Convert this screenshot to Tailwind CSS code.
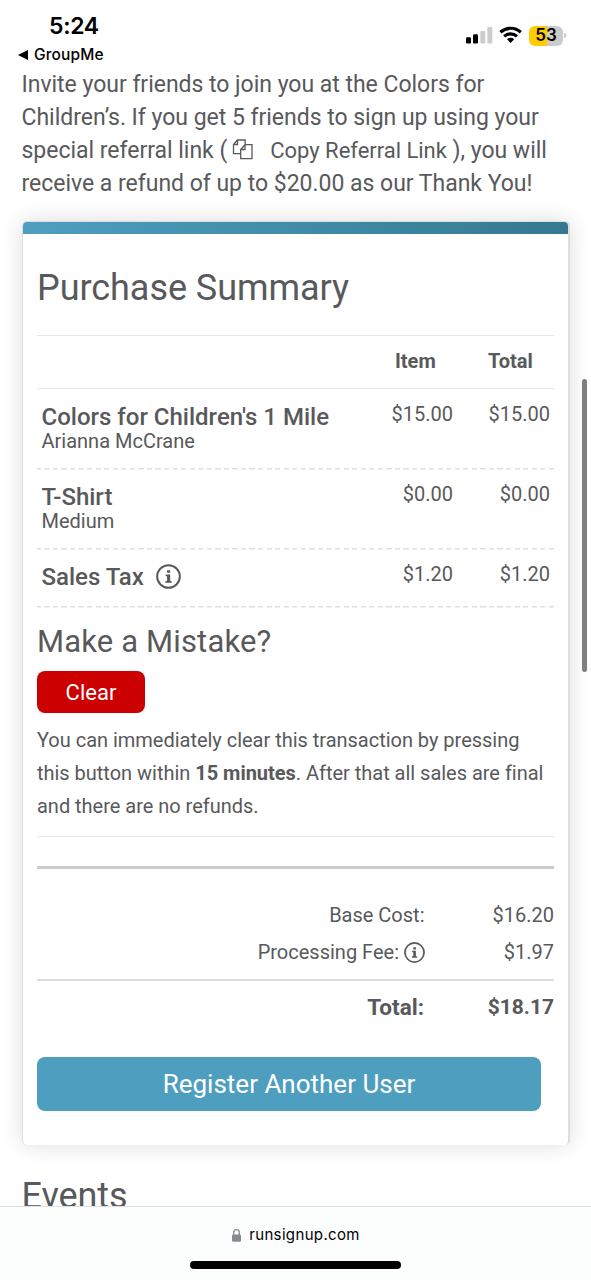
<!DOCTYPE html>
<html lang="en">
<head>
<meta charset="utf-8">
<title>Purchase Summary</title>
<script src="https://cdn.jsdelivr.net/npm/@tailwindcss/browser@4"></script>
</head>
<body class="bg-white">
<div class="relative flex h-[1280px] w-[591px] flex-col overflow-hidden bg-white font-['Roboto',sans-serif] text-[#58595b]">
  <header class="flex h-[68px] shrink-0 justify-between font-['Inter',sans-serif] text-black">
    <div class="pl-[18px] pt-[11px]">
      <div class="pl-[31px] text-[23px] leading-[30px] font-semibold tracking-[-0.3px]">5:24</div>
      <div class="mt-[4px] flex items-center gap-[6px] text-[15.5px] leading-[20px] font-medium tracking-[0.15px]">
        <svg class="h-[10px] w-[10px]" viewBox="0 0 10 10"><path d="M0 5 10 0v10z"/></svg>
        <span>GroupMe</span>
      </div>
    </div>
    <div class="flex items-start pr-[24px] pt-[25px]">
      <svg class="mt-[2px] h-[17px] w-[27px]" viewBox="0 0 27 17"><rect x="0" y="10.3" width="5" height="6.2" rx="1.3"/><rect x="7" y="7.3" width="5" height="9.2" rx="1.3"/><rect x="14.3" y="4" width="5" height="12.5" rx="1.3" fill="#ccc"/><rect x="21.3" y="0" width="5" height="16.5" rx="1.3" fill="#ccc"/></svg>
      <svg class="ml-[6px] mt-[1px] h-[18px] w-[24px]" viewBox="0 0 24 18"><g fill="none" stroke="#000" stroke-width="3.2"><path d="M1.4 6.2a15.2 15.2 0 0 1 20.4 0"/><path d="M5.2 10.4a9.4 9.4 0 0 1 12.8 0"/></g><path d="M11.6 17 8 13.2a5.2 5.2 0 0 1 7.2 0z"/></svg>
      <div class="ml-[6px] mt-[0.5px] flex h-[20px] w-[34px] items-center justify-center rounded-[6px] bg-linear-to-r from-[#fc0] from-53% to-[#ccc] to-53% text-[17px] leading-none font-semibold">53</div>
      <svg class="ml-[1px] mt-[8px] h-[5px] w-[3px]" viewBox="0 0 3 5"><path d="M0 0a2.5 2.5 0 0 1 0 5z" fill="#ccc"/></svg>
    </div>
  </header>

  <main class="h-[1138px] shrink-0 overflow-hidden px-[21.5px]">
    <p class="text-[23px] leading-[33px] whitespace-nowrap tracking-[-0.02px]">
      Invite your friends to join you at the Colors for<br>
      Children’s. If you get 5 friends to sign up using your<br>
      special referral link (<svg class="mr-[4px] ml-[5px] mb-[4px] inline-block h-[21px] w-[22px]" viewBox="0 0 22 21" fill="none" stroke="#58595b" stroke-width="1.3"><path d="M8.500 14.600H1.500V5.500L5.500 1H13.200V5.500M1.500 5.500H5.500V1M13 5.700H20V19.700H8.700V10.500L13 5.700V10.500H8.700"/></svg><span class="ml-[12px] text-[22px]">Copy Referral Link</span> ), you will<br>
      receive a refund of up to $20.00 as our Thank You!
    </p>

    <section class="mt-[21px] ml-[0.5px] h-[924px] w-[548px] rounded-[5px] border-t border-r-2 border-l border-[#dedede] bg-white shadow-[0_0_22px_rgba(0,0,0,0.14)]">
      <div class="h-[12px] rounded-t-[4px] bg-linear-to-r from-[#4e9fbf] to-[#357990]"></div>
      <div class="pr-[14px] pl-[14px]">
        <h1 class="h-[101px] pt-[30px] text-[36px] leading-[48px] tracking-[-0.050px]">Purchase Summary</h1>
        <div class="grid h-[53px] grid-cols-[1fr_100px_97px] border-t border-[#e6e6e6] pt-[13px] text-[20px] leading-[24px] font-bold">
          <span></span><span class="pl-[38px]">Item</span><span class="pl-[31px]">Total</span>
        </div>
        <div class="grid h-[80px] grid-cols-[1fr_100px_97px] border-t border-[#e6e6e6] pr-[4px] pl-[4.500px] pt-[12px] text-[20px]">
          <div class="pt-[3px] whitespace-nowrap"><div class="text-[24px] leading-[26px] font-medium">Colors for Children's 1 Mile</div><div class="leading-[23px]">Arianna McCrane</div></div>
          <span class="text-right leading-[26px]">$15.00</span><span class="text-right leading-[26px]">$15.00</span>
        </div>
        <div class="grid h-[80px] grid-cols-[1fr_100px_97px] bg-[repeating-linear-gradient(90deg,#dedede_0_4px,transparent_4px_7.3px,#dedede_7.3px_8.55px)] bg-[length:100%_1.500px] bg-no-repeat pr-[4px] pl-[4.500px] pt-[13px] text-[20px]">
          <div class="pt-[3px]"><div class="text-[24px] leading-[26px] font-medium">T-Shirt</div><div class="leading-[23px]">Medium</div></div>
          <span class="text-right leading-[26px]">$0.00</span><span class="text-right leading-[26px]">$0.00</span>
        </div>
        <div class="grid h-[58px] grid-cols-[1fr_100px_97px] bg-[repeating-linear-gradient(90deg,#dedede_0_4px,transparent_4px_7.3px,#dedede_7.3px_8.55px)] bg-[length:100%_1.500px] bg-no-repeat pr-[4px] pl-[4.500px] pt-[13px] text-[20px]">
          <div class="flex h-[26px] items-center gap-[12px] self-start mt-[3px] text-[24px] leading-[26px] font-medium">Sales Tax
            <svg class="mb-[2px] h-[25px] w-[25px]" viewBox="0 0 24 24"><circle cx="12" cy="12" r="10.900" fill="none" stroke="#58595b" stroke-width="1.900"/><path d="M10.600 5.900h3v2.600h-3zM9.300 10h4.300v6.200h1.400V18H9v-1.800h1.600v-4.400H9.300z" fill="#58595b"/></svg>
          </div>
          <span class="text-right leading-[26px]">$1.20</span><span class="text-right leading-[26px]">$1.20</span>
        </div>
        <h2 class="bg-[repeating-linear-gradient(90deg,#dedede_0_4px,transparent_4px_7.3px,#dedede_7.3px_8.55px)] bg-[length:100%_1.500px] bg-no-repeat pt-[16px] text-[31px] leading-[40px] tracking-[0.150px]">Make a Mistake?</h2>
        <button class="mt-[9px] block h-[42px] w-[108px] rounded-[8px] bg-[#c00] pt-px text-[22px] leading-[41px] text-white">Clear</button>
        <p class="h-[124px] border-b border-[#e6e6e6] pt-[11px] text-[20px] leading-[33px] tracking-[-0.020px] whitespace-nowrap">You can immediately clear this transaction by pressing<br>this button within <b>15 minutes</b>. After that all sales are final<br>and there are no refunds.</p>
        <div class="mt-[29px] border-t-3 border-[#ccc] pt-[28px] text-[20px] leading-[37px]">
          <div class="flex"><span class="w-[387.500px] text-right">Base Cost:</span><span class="flex-1 text-right">$16.20</span></div>
          <div class="flex"><span class="flex w-[388px] items-center justify-end gap-[5px]">Processing Fee:<svg class="h-[21px] w-[21px]" viewBox="0 0 24 24"><circle cx="12" cy="12" r="10.900" fill="none" stroke="#58595b" stroke-width="2"/><path d="M10.600 5.900h3v2.600h-3zM9.300 10h4.300v6.200h1.400V18H9v-1.800h1.600v-4.400H9.300z" fill="#58595b"/></svg></span><span class="flex-1 text-right">$1.97</span></div>
        </div>
        <div class="mt-[8px] flex border-t-2 border-[#ddd] pt-[12px] text-[21px] leading-[28px] font-bold"><span class="w-[387px] text-right text-[22.500px]">Total:</span><span class="flex-1 text-right">$18.17</span></div>
        <button class="mt-[35.500px] block h-[54px] w-[504px] rounded-[8px] bg-[#4e9ebf] text-[26px] leading-[54px] text-white">Register Another User</button>
      </div>
    </section>
    <h1 class="mt-[27px] text-[36px] leading-[48px] tracking-[-0.100px]">Events</h1>
  </main>

  <footer class="flex flex-1 flex-col items-center border-t border-[#dfe0e1] bg-[#fcfdfd] pt-[17px] text-black">
    <div class="flex h-[22px] items-center gap-[8px] pl-px font-['Inter',sans-serif] text-[15px] tracking-[0.350px]">
      <svg class="h-[13px] w-[9px]" viewBox="0 0 9 13"><rect y="5.500" width="9" height="7.200" rx="1.300" fill="#8a8a8e"/><path d="M1.700 6V3.500a2.800 2.800 0 0 1 5.600 0V6" fill="none" stroke="#8a8a8e" stroke-width="1.300"/></svg>
      <span>runsignup.com</span>
    </div>
    <div class="mt-[15px] h-[8px] w-[211px] rounded-full bg-black"></div>
  </footer>
  <div class="absolute top-[379px] left-[582px] h-[293px] w-[5px] rounded-full bg-[#808080]"></div>
</div>
</body>
</html>
